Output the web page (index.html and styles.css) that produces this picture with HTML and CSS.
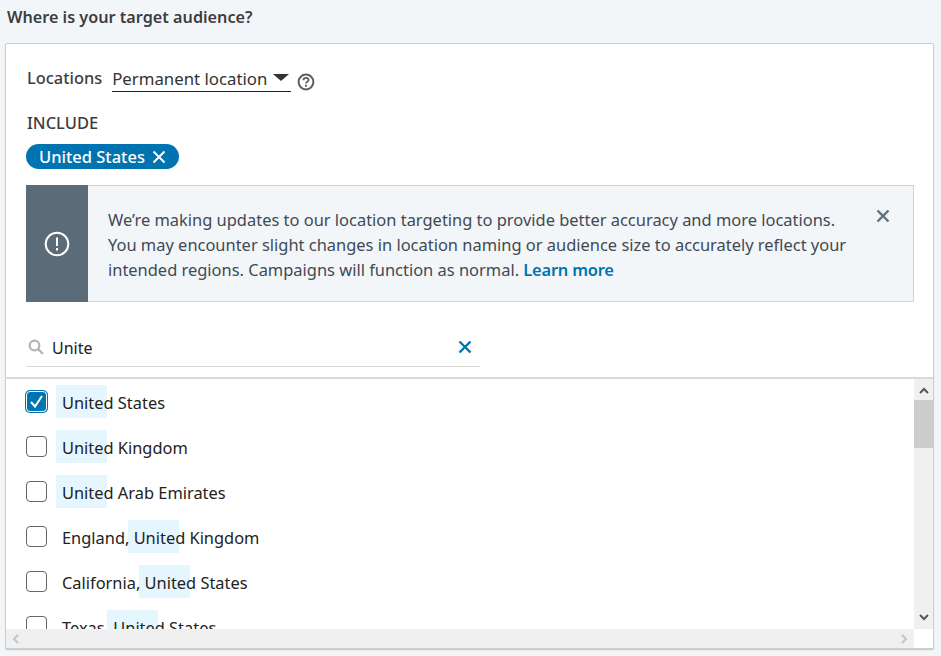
FILE: index.html
```html
<!DOCTYPE html>
<html lang="en">
<head>
<meta charset="utf-8">
<title>Target audience</title>
<link rel="stylesheet" href="styles.css">
</head>
<body>
<h1 class="title">Where is your target audience?</h1>
<section class="card">
  <div class="top">
    <div class="loc-row">
      <span class="loc-label">Locations</span>
      <span class="select">Permanent location<span class="caret"></span></span>
      <svg class="help" width="18" height="18" viewBox="0 0 18 18"><circle cx="9" cy="9" r="7.4" fill="none" stroke="#5e5e5e" stroke-width="2"/><path d="M6.4 7.3c0-1.500 1.100-2.400 2.600-2.400s2.600.9 2.600 2.200c0 1.800-2.600 1.700-2.600 3.400" fill="none" stroke="#5e5e5e" stroke-width="1.800"/><rect x="8" y="11.800" width="2" height="1.900" fill="#5e5e5e"/></svg>
    </div>
    <div class="include">INCLUDE</div>
    <div class="pill">United States<svg width="14" height="14" viewBox="0 0 14 14"><path d="M1.500 1.500l11 11M12.500 1.500l-11 11" stroke="#fff" stroke-width="2" fill="none"/></svg></div>
    <div class="notice">
      <div class="notice-side"><svg width="26" height="26" viewBox="0 0 26 26"><circle cx="13" cy="13" r="11.300" fill="none" stroke="#fff" stroke-width="2"/><rect x="12" y="6.500" width="2" height="8.500" fill="#fff"/><rect x="12" y="17" width="2" height="2.500" fill="#fff"/></svg></div>
      <p class="notice-text">We’re making updates to our location targeting to provide better accuracy and more locations. You may encounter slight changes in location naming or audience size to accurately reflect your intended regions. Campaigns will function as normal. <a class="link">Learn more</a></p>
      <svg class="notice-close" width="14" height="14" viewBox="0 0 14 14"><path d="M1.500 1.500l11 11M12.500 1.500l-11 11" stroke="#5e6e7c" stroke-width="2.400" fill="none"/></svg>
    </div>
    <div class="search">
      <svg class="search-icon" width="16" height="16" viewBox="0 0 16 16"><circle cx="6.500" cy="6.500" r="4.800" fill="none" stroke="#b5b5b5" stroke-width="2.200"/><path d="M10 10l5 5" stroke="#b5b5b5" stroke-width="2.400"/></svg>
      <span class="search-text">Unite</span>
      <svg class="search-clear" width="14" height="14" viewBox="0 0 14 14"><path d="M1.500 1.500l11 11M12.500 1.500l-11 11" stroke="#0073b1" stroke-width="2.400" fill="none"/></svg>
    </div>
  </div>
  <div class="list-wrap">
    <ul class="list">
      <li class="item"><span class="box checked"><svg width="19" height="19" viewBox="0 0 19 19"><path d="M4 10l4 4.500 7-10.500" stroke="#fff" stroke-width="2" fill="none"/></svg></span><span class="name"><mark>United</mark> States</span></li>
      <li class="item"><span class="box"></span><span class="name"><mark>United</mark> Kingdom</span></li>
      <li class="item"><span class="box"></span><span class="name"><mark>United</mark> Arab Emirates</span></li>
      <li class="item"><span class="box"></span><span class="name">England, <mark>United</mark> Kingdom</span></li>
      <li class="item"><span class="box"></span><span class="name">California, <mark>United</mark> States</span></li>
      <li class="item"><span class="box"></span><span class="name">Texas, <mark>United</mark> States</span></li>
    </ul>
    <div class="vbar">
      <svg class="arrow" width="10" height="7" viewBox="0 0 10 7"><path d="M1 6l4-4 4 4" stroke="#555" stroke-width="2" fill="none"/></svg>
      <div class="thumb"></div>
      <svg class="arrow arrow-down" width="10" height="7" viewBox="0 0 10 7"><path d="M1 1l4 4 4-4" stroke="#555" stroke-width="2" fill="none"/></svg>
    </div>
  </div>
  <div class="hbar">
    <svg width="7" height="10" viewBox="0 0 7 10"><path d="M6 1L2 5l4 4" stroke="#c4c4c4" stroke-width="2" fill="none"/></svg>
    <svg width="7" height="10" viewBox="0 0 7 10"><path d="M1 1l4 4-4 4" stroke="#c4c4c4" stroke-width="2" fill="none"/></svg>
  </div>
</section>
</body>
</html>
```
FILE: styles.css
```css
* { box-sizing: border-box; }
html, body { height: 100%; }
body {
  margin: 0;
  padding: 0 7px 7px 5px;
  background: #f3f6f8;
  font-family: "Noto Sans", "Open Sans", sans-serif;
  color: #333;
  overflow: hidden;
}
.title {
  margin: 0;
  padding: 6px 0 0 2px;
  height: 43px;
  font-size: 16.2px;
  line-height: 22px;
  font-weight: 600;
  color: #3d3d3d;
}
.card {
  height: 606px;
  background: #fff;
  border: 1px solid #cfcfcf;
  border-radius: 2px;
  box-shadow: 0 1px 1px rgba(0,0,0,.2);
  display: flex;
  flex-direction: column;
  overflow: hidden;
}
.top { padding: 22px 20px 0 20px; height: 335px; border-bottom: 2px solid #d9d9d9; }
.loc-row { display: flex; align-items: flex-start; height: 27px; }
.loc-label { padding-left: 1px; font-size: 16.4px; line-height: 24px; margin-right: 10px; color: #3d3d3d; font-weight: 500; }
.select {
  display: flex;
  width: 179px;
  height: 26px;
  font-size: 16.8px;
  line-height: 26px;
  border-bottom: 1px solid #222;
  color: #333;
  white-space: nowrap;
}
.caret {
  margin: 8px 0 0 6px;
  width: 0; height: 0;
  border-left: 8px solid transparent;
  border-right: 8px solid transparent;
  border-top: 7px solid #333;
}
.help { margin: 7px 0 0 6px; }
.include { margin-top: 17px; padding-left: 1px; height: 27px; font-size: 16.5px; line-height: 26px; color: #3d3d3d; font-weight: 500; }
.pill {
  display: flex;
  width: fit-content;
  align-items: center;
  gap: 7px;
  height: 25px;
  margin-top: 7px;
  padding: 0 13px;
  border-radius: 13px;
  background: #0073b1;
  color: #fff;
  font-size: 16.5px;
  font-weight: 500;
}
.notice {
  display: flex;
  margin-top: 16px;
  width: 888px;
  height: 117px;
  background: #f3f6f8;
  border: 1px solid #cfd2d4;
}
.notice-side {
  width: 62px;
  margin: -1px 0 -1px -1px;
  flex: none;
  background: #5c6b78;
  display: flex;
  align-items: center;
  justify-content: center;
}
.notice-text { margin: 21px 0 0 20px; width: 745px; font-size: 16.45px; line-height: 25px; color: #3f4a55; }
.link { color: #0073b1; font-weight: 600; letter-spacing: -.2px; }
.notice-close { margin: 23px 0 0 23px; }
.search {
  display: flex;
  align-items: center;
  width: 454px;
  height: 47px;
  margin-top: 18px;
  padding-top: 8px;
  border-bottom: 1px solid #d9d9d9;
}
.search-icon { margin-left: 2px; }
.search-text { margin-left: 8px; padding-top: 1px; font-size: 16px; color: #222; flex: 1; }
.search-clear { margin-right: 8px; }
.list-wrap { flex: 1; min-height: 0; display: flex; }
.list { list-style: none; margin: 0; padding: 0 0 0 20px; flex: 1; overflow: hidden; isolation: isolate; }
.item { display: flex; height: 45px; padding-top: 7px; align-items: flex-start; }
.box {
  width: 21px; height: 21px;
  margin-top: 5px;
  border: 1px solid #666;
  border-radius: 4px;
  flex: none;
  background: #fff;
}
.box.checked {
  background: #0073b1;
  border: 1px solid #fff;
  box-shadow: 0 0 0 1px #0073b1;
}
.box.checked svg { display: block; }
.name { margin-left: 15px; font-size: 16.4px; line-height: 33px; color: #222; white-space: pre; }
mark {
  background: none;
  color: inherit;
  position: relative;
}
mark::before {
  content: "";
  position: absolute;
  z-index: -1;
  left: -6px;
  top: -6px;
  width: 51px;
  height: 33px;
  background: #e6f6ff;
}
.vbar {
  width: 19px;
  flex: none;
  background: #f0f0f0;
  display: flex;
  flex-direction: column;
  align-items: center;
}
.arrow { margin-top: 8px; flex: none; }
.thumb { width: 19px; height: 48px; margin-top: 6px; background: #cdcdcd; }
.arrow-down { margin-top: auto; margin-bottom: 8px; }
.hbar {
  height: 19px;
  margin-right: 19px;
  background: #f0f0f0;
  display: flex;
  justify-content: space-between;
  align-items: center;
  padding: 0 6px;
  flex: none;
}
```
